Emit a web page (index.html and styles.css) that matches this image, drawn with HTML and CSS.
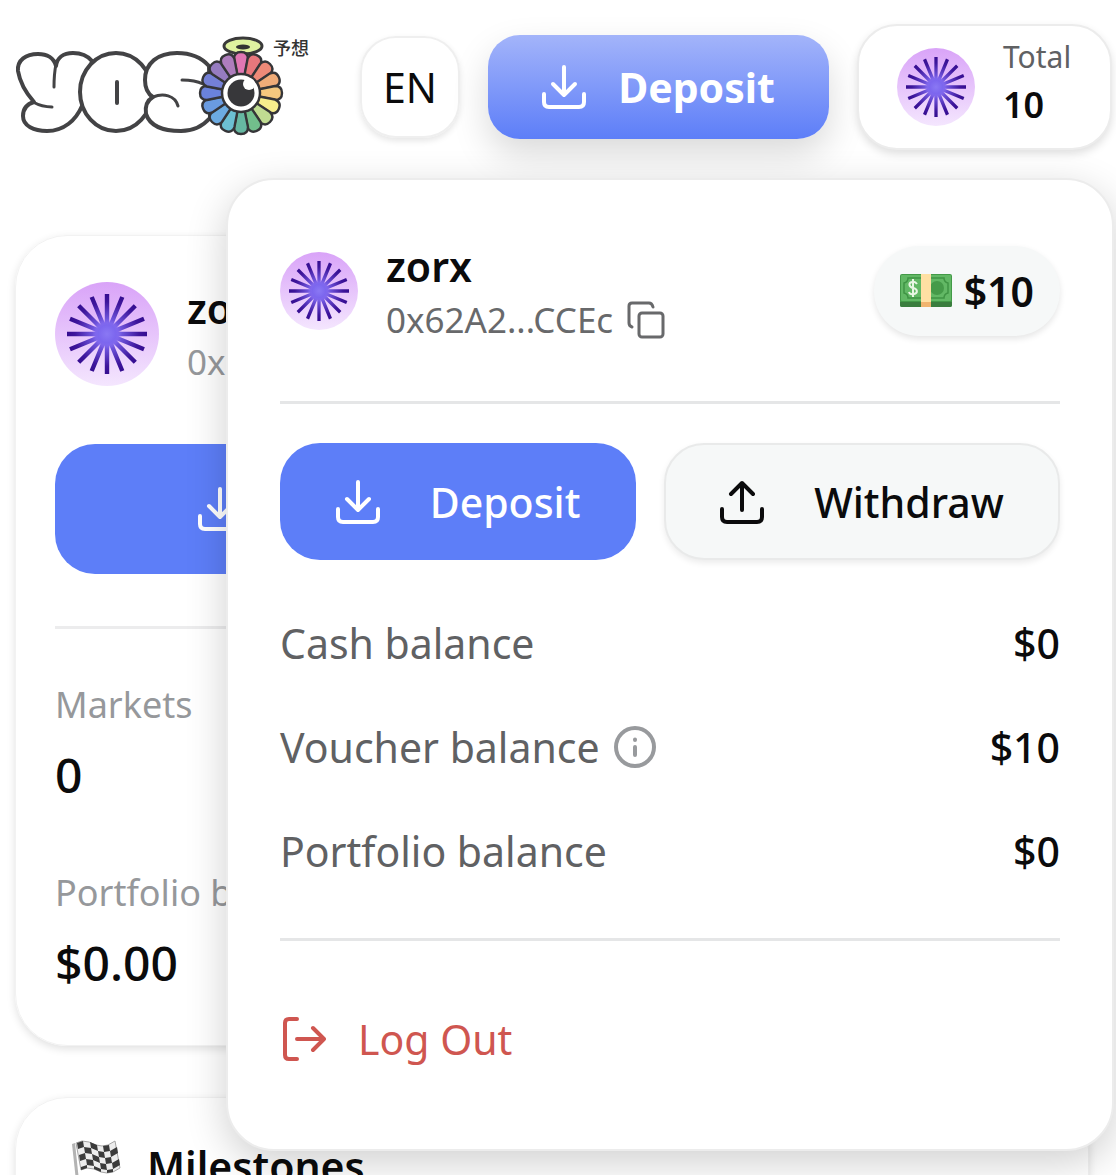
FILE: index.html
```html
<!DOCTYPE html>
<html lang="en">
<head>
<meta charset="utf-8">
<title>YOSO</title>
<link rel="stylesheet" href="styles.css">
</head>
<body>
<svg class="defs" width="0" height="0" aria-hidden="true">
  <defs>
    <linearGradient id="orb" x1="0" y1="0" x2="0" y2="1"><stop offset="0" stop-color="#d9a3f8"/><stop offset="1" stop-color="#f4e6fe"/></linearGradient>
    <radialGradient id="ray" gradientUnits="userSpaceOnUse" cx="52" cy="52" r="40"><stop offset="0" stop-color="#8a78f4"/><stop offset=".28" stop-color="#7a62ea"/><stop offset=".8" stop-color="#3e169c"/><stop offset="1" stop-color="#350d90"/></radialGradient>
    <radialGradient id="core"><stop offset="0" stop-color="#8a78f4"/><stop offset=".6" stop-color="#7c66ee"/><stop offset="1" stop-color="#8d70ee" stop-opacity="0"/></radialGradient>
    <symbol id="avatar" viewBox="0 0 104 104">
      <circle cx="52" cy="52" r="52" fill="url(#orb)"/>
      <path fill="none" stroke="url(#ray)" stroke-width="4.4" d="M52 12V92.01M12 52H92.01M23.7 23.7L80.3 80.3M80.3 23.7L23.7 80.3M36.7 15L67.3 89M67.3 15L36.7 89M15 36.7L89 67.3M15 67.3L89 36.7"/>
      <circle cx="52" cy="52" r="15" fill="url(#core)"/>
    </symbol>
    <symbol id="download" viewBox="0 0 44 44"><path d="M22 2V30M11 19L22 30L33 19M2 29V37Q2 42 7 42H37Q42 42 42 37V29"/></symbol>
    <symbol id="upload" viewBox="0 0 44 44"><path d="M22 30V3M11 14L22 3L33 14M2 29V37Q2 42 7 42H37Q42 42 42 37V29"/></symbol>
    <path id="petal" d="M-3.500 -17L-7 -34Q-7 -41 0 -41Q7 -41 7 -34L3.500 -17Z"/>
  </defs>
</svg>
<div class="page">
  <header class="topbar">
    <a class="brand" href="#" aria-label="YOSO">
      <svg width="268" height="100" viewBox="15 37 268 100" overflow="visible" aria-hidden="true">
        <g fill="#fff" stroke="#434345" stroke-width="4" stroke-linecap="round" stroke-linejoin="round">
          <path d="M92 61C87 55 80 53 73 53C63 53 57 58 56 66C54 58 47 54 38 54C26 54 17 60 18 71C20 83 26 93 34 102C27 104 23 109 23 116C23 126 34 131 47 131C64 131 76 120 82 106Z"/>
          <path d="M56 64Q54 74 54 87M33 102Q42 107 52 107" fill="none" stroke-width="3"/>
          <ellipse cx="116" cy="92" rx="36" ry="39"/>
          <path d="M117 82V103" fill="none"/>
          <path d="M209 66C201 57 190 53 177 53C158 53 145 63 145 80C145 88 148 94 153 97C146 101 145 107 146 114C150 126 163 131 181 131C194 131 203 126 210 118Z"/>
          <path d="M153 97C163 93 175 95 178 106M182 80C190 80 197 81 203 84" fill="none" stroke-width="3"/>
        </g>
        <ellipse cx="243" cy="46" rx="19" ry="8" fill="#dff2a0" stroke="#3a3a3a" stroke-width="3"/>
        <ellipse cx="243" cy="47" rx="7" ry="2.500" fill="#333"/>
        <g transform="translate(241 93)" stroke="#353538" stroke-width="2.4" stroke-linejoin="round">
          <use href="#petal" fill="#e077b4"/>
          <use href="#petal" fill="#e8777c" transform="rotate(22.500)"/>
          <use href="#petal" fill="#ee8a78" transform="rotate(45)"/>
          <use href="#petal" fill="#f0ac78" transform="rotate(67.500)"/>
          <use href="#petal" fill="#f5c87e" transform="rotate(90)"/>
          <use href="#petal" fill="#f7ee8c" transform="rotate(112.500)"/>
          <use href="#petal" fill="#c0dc92" transform="rotate(135)"/>
          <use href="#petal" fill="#72bf8c" transform="rotate(157.500)"/>
          <use href="#petal" fill="#66b8a2" transform="rotate(180)"/>
          <use href="#petal" fill="#6cc0d2" transform="rotate(202.500)"/>
          <use href="#petal" fill="#6cabe2" transform="rotate(225)"/>
          <use href="#petal" fill="#6a9be0" transform="rotate(247.500)"/>
          <use href="#petal" fill="#6a82dc" transform="rotate(270)"/>
          <use href="#petal" fill="#7480d6" transform="rotate(292.500)"/>
          <use href="#petal" fill="#967cc0" transform="rotate(315)"/>
          <use href="#petal" fill="#ae7dbd" transform="rotate(337.500)"/>
        </g>
        <circle cx="241" cy="93" r="19" fill="#fff" stroke="#353538" stroke-width="2.500"/>
        <circle cx="241" cy="93" r="13.500" fill="#37373a"/>
        <circle cx="249" cy="84" r="6" fill="#fff"/>
      </svg>
      <span class="brand-kanji" lang="ja">予想</span>
    </a>
    <button class="lang" type="button">EN</button>
    <button class="btn btn-hero" type="button"><svg class="icon"><use href="#download"/></svg>Deposit</button>
    <button class="total" type="button">
      <svg class="avatar"><use href="#avatar"/></svg>
      <span class="total-text"><span class="total-label">Total</span><span class="total-value">10</span></span>
    </button>

    <section class="menu" aria-label="Account">
      <div class="menu-head">
        <svg class="avatar"><use href="#avatar"/></svg>
        <div class="who">
          <span class="name">zorx</span>
          <span class="address">0x62A2...CCEc
            <button class="copy" type="button" aria-label="Copy address"><svg width="38" height="38" viewBox="0 0 38 38"><rect x="12" y="12" width="24" height="24" rx="3"/><path d="M5 26Q2 25 2 22V5Q2 2 5 2H22Q25 2 26 6"/></svg></button>
          </span>
        </div>
        <span class="chip">
          <svg width="52" height="34" viewBox="0 0 52 34" aria-hidden="true"><rect width="52" height="33" rx="2" fill="#439a48"/><path d="M0 28H52V31Q52 33 50 33H2Q0 33 0 31Z" fill="#3a7d3e"/><rect x="1" y="1" width="50" height="26" rx="1" fill="#62b865"/><path d="M8 4H44Q44 8 48 9V19Q44 20 44 24H8Q8 20 4 19V9Q8 8 8 4Z" fill="none" stroke="#3f9444" stroke-width="1.500"/><circle cx="37" cy="14" r="7" fill="#459a49"/><path d="M17 10Q15 7 12 8C8 9 9 13 13 14C18 15 18 19 14 20Q10 21 9 18M13 5V23" fill="none" stroke="#e9f6e4" stroke-width="2"/><path d="M21 0H31V28H21Z" fill="#ffe0a3"/><path d="M21 28H31V33H21Z" fill="#f0b46f"/></svg>
          $10
        </span>
      </div>
      <div class="menu-actions">
        <button class="btn btn-primary" type="button"><svg class="icon"><use href="#download"/></svg>Deposit</button>
        <button class="btn btn-plain" type="button"><svg class="icon"><use href="#upload"/></svg>Withdraw</button>
      </div>
      <dl class="balances">
        <div class="balance"><dt>Cash balance</dt><dd>$0</dd></div>
        <div class="balance"><dt>Voucher balance <svg class="info" width="42" height="42" viewBox="0 0 42 42"><circle cx="21" cy="21" r="19"/><path d="M21 21V29M21 13.500V14"/></svg></dt><dd>$10</dd></div>
        <div class="balance"><dt>Portfolio balance</dt><dd>$0</dd></div>
      </dl>
      <button class="logout" type="button"><svg width="46" height="46" viewBox="0 0 46 46"><path d="M17 3H9Q5 3 5 7V39Q5 43 9 43H17M17 23H44M33 12L44 23L33 34"/></svg>Log Out</button>
    </section>
  </header>

  <main class="content">
    <section class="card profile">
      <div class="profile-head">
        <svg class="avatar avatar-lg"><use href="#avatar"/></svg>
        <div class="who"><span class="name">zorx</span><span class="address muted">0x62A2...CCEc</span></div>
      </div>
      <div class="profile-actions">
        <button class="btn btn-primary" type="button"><svg class="icon"><use href="#download"/></svg>Deposit</button>
      </div>
      <dl class="stats">
        <div><dt>Markets</dt><dd>0</dd></div>
        <div><dt>Portfolio balance</dt><dd>$0.00</dd></div>
      </dl>
    </section>
    <section class="card milestones">
      <h2><svg width="52" height="52" viewBox="0 0 52 52" aria-hidden="true">
        <path d="M1 4L4 3L9 50H6Z" fill="#b3b3b3"/>
        <path d="M5 3l6-2 7 1 7 3 6 1 6-1 7-4 5 27-7 4-6 1-6-1-7-3-7-1-6 2z" fill="#ededed" stroke="#a5a5a5"/>
        <path fill="#3b3b3b" d="M6 3l6-2 1 6-6 2zM8 15l6-2 1 6-6 2zM10 27l6-2v3l-6 2zM13 7l7 1 1 6-7-1zM15 19l7 1 1 6-7-1zM19 2l7 3 1 6-7-3zM21 14l7 3 1 6-7-3zM23 26l7 3v3l-7-3zM27 11l6 1 1 6-6-1zM29 23l6 1 1 6-6-1zM32 6l6-1 1 6-6 1zM34 18l6-1 1 6-6 1zM36 30l6-1v3l-6 1zM39 11l7-4 1 6-7 4zM41 23l7-4 1 6-7 4z"/>
      </svg>Milestones</h2>
    </section>
  </main>
</div>
</body>
</html>
```
FILE: styles.css
```css
* { box-sizing: border-box; }
body { margin: 0; background: #fff; color: #0b0b0c; font: 500 41px/52px "Noto Sans", sans-serif; }
button { font: inherit; color: inherit; border: 0; background: none; padding: 0; }
dl, dd, h2 { margin: 0; }
svg { display: block; flex: none; }
.defs { position: absolute; }
.page { height: 100vh; overflow: hidden; }
.topbar { position: relative; z-index: 1; display: flex; align-items: center; gap: 28px; padding: 24px 4px 0 15px; }
.brand { display: flex; flex: 1; align-items: flex-start; color: #333; text-decoration: none; }
.brand-kanji { margin-left: -10px; font: 500 18px/20px "Noto Sans CJK JP", sans-serif; white-space: nowrap; }
.lang { width: 100px; height: 102px; border-radius: 36px; border: 2px solid #efefef; box-shadow: 0 3px 6px #0000001a; font-weight: 400; }
.btn { display: flex; align-items: center; justify-content: center; gap: 50px; border-radius: 40px; }
.icon { width: 44px; height: 44px; fill: none; stroke: currentColor; stroke-width: 4px; stroke-linecap: round; stroke-linejoin: round; }
.btn-hero { width: 341px; height: 104px; gap: 32px; border-radius: 32px; color: #fff; font-weight: 700; background: linear-gradient(#a3b4fa, #5d7ef8); box-shadow: 0 16px 36px #00000026; }
.total { display: flex; align-items: center; gap: 28px; width: 255px; height: 126px; padding-left: 38px; border-radius: 40px; border: 2px solid #ececec; box-shadow: 0 4px 8px #00000020; text-align: left; background: #fff; }
.avatar { width: 78px; height: 78px; }
.avatar-lg { width: 104px; height: 104px; }
.total-text, .who { display: flex; flex-direction: column; }
.total-text { padding-bottom: 8px; }
.total-label { font-size: 30px; font-weight: 400; line-height: 44px; color: #606163; }
.total-value { font-size: 36px; line-height: 52px; font-weight: 600; }

.menu { position: absolute; top: 178px; left: 226px; right: 2px; padding: 66px 52px 84px; background: #fff; border: 2px solid #ececec; border-radius: 48px; box-shadow: 0 12px 40px #00000030; }
.menu-head { display: flex; align-items: flex-start; gap: 28px; padding-bottom: 47px; border-bottom: 3px solid #e5e6e7; }
.menu-head .avatar { margin-top: 6px; }
.who { flex: 1; }
.name { font-weight: 600; line-height: 40px; }
.address { display: flex; align-items: center; gap: 14px; line-height: 68px; font-size: 35px; font-weight: 400; color: #68696b; }
.muted { color: #96989b; }
.copy svg { fill: none; stroke: #68696b; stroke-width: 3; stroke-linecap: round; }
.chip { display: flex; align-items: center; gap: 12px; height: 90px; padding: 0 26px; border-radius: 45px; background: #f6f8f8; box-shadow: 0 3px 6px #0000001a; font-weight: 600; }
.menu-actions { display: grid; grid-template-columns: 356fr 396fr; gap: 28px; padding-top: 39px; }
.menu-actions .btn { height: 117px; }
.btn-primary { background: #5d7ef8; color: #fff; }
.btn-plain { background: #f6f8f8; border: 2px solid #e9eaea; box-shadow: 0 3px 6px #00000014; }
.balances { padding: 31px 0 35px; border-bottom: 3px solid #e5e6e7; }
.balance { display: flex; align-items: center; justify-content: space-between; height: 104px; }
.balance dt { display: flex; align-items: center; gap: 14px; font-weight: 400; color: #606163; }
.info { fill: none; stroke: #989a9d; stroke-width: 4; stroke-linecap: round; }
.logout { display: flex; align-items: center; gap: 32px; margin-top: 72px; font-weight: 400; color: #cf5650; }
.logout svg { fill: none; stroke: currentColor; stroke-width: 4; stroke-linecap: round; stroke-linejoin: round; }

.content { display: flex; flex-direction: column; gap: 51px; padding: 85px 27px 0 15px; }
.card { padding: 46px 39px 42px; border-radius: 52px; border: 1px solid #f2f2f2; box-shadow: 0 3px 8px #0000001f; }
.profile-head { display: flex; align-items: flex-start; gap: 28px; }
.profile-head .who { padding-top: 6px; }
.profile-actions { padding: 48px 0 52px; border-bottom: 3px solid #ececed; }
.profile-actions .btn { width: 530px; height: 130px; }
.stats { display: flex; flex-direction: column; gap: 48px; padding-top: 46px; }
.stats dt { font-size: 36px; font-weight: 400; color: #96989b; line-height: 60px; }
.stats dd { font-size: 48px; line-height: 80px; }
.milestones { padding: 42px 55px; }
.milestones h2 { display: flex; align-items: center; gap: 24px; font-size: 41px; font-weight: 600; }
```
